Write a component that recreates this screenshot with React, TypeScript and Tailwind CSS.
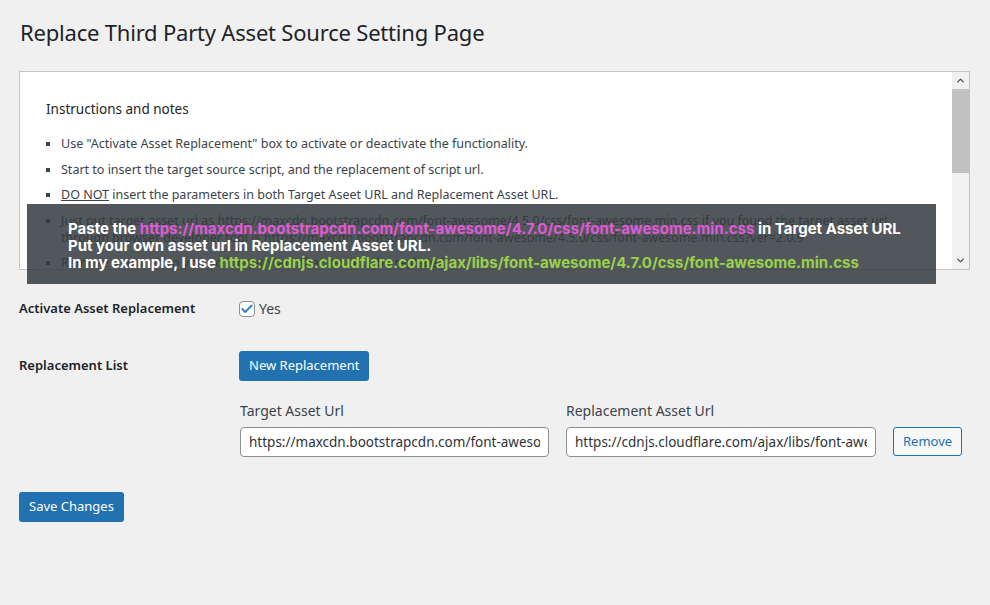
import React, { useState } from "react";
import { ChevronUp, ChevronDown, Check } from "lucide-react";

type Replacement = {
  id: number;
  target: string;
  replacement: string;
};

const notes = [
  <>Use "Activate Asset Replacement" box to activate or deactivate the functionality.</>,
  <>Start to insert the target source script, and the replacement of script url.</>,
  <>
    <span className="underline">DO NOT</span> insert the parameters in both Target Aseet URL and
    Replacement Asset URL.
  </>,
  <>
    Just put target asset url as https://maxcdn.bootstrapcdn.com/font-awesome/4.5.0/css/font-awesome.min.css
    if you found the target asset url through browser developer tool is
    https://maxcdn.bootstrapcdn.com/font-awesome/4.5.0/css/font-awesome.min.css?ver=2.0.9
  </>,
  <>Remove a row when you no longer want that asset to be replaced.</>,
];

export default function App() {
  const [active, setActive] = useState(true);
  const [rows, setRows] = useState<Replacement[]>([
    {
      id: 1,
      target: "https://maxcdn.bootstrapcdn.com/font-awesome/4.7.0/css/font-awesome.min.css",
      replacement: "https://cdnjs.cloudflare.com/ajax/libs/font-awesome/4.7.0/css/font-awesome.min.css",
    },
  ]);

  const addRow = () =>
    setRows((prev) => [...prev, { id: Date.now(), target: "", replacement: "" }]);

  return (
    <div
      className="relative min-h-[605px] w-full bg-[#f0f0f1] pl-[19px] pr-[20px] pt-[17px] text-[#3c434a]"
      style={{ fontFamily: '"Noto Sans", "Open Sans", sans-serif' }}
    >
      {/* Page title */}
      <h1 className="pl-px text-[22px] leading-[30px] tracking-[-0.2px] text-[#1d2327]">
        Replace Third Party Asset Source Setting Page
      </h1>

      {/* Instructions box */}
      <div className="mt-[24px] flex h-[199px] w-[951px] border border-[#c3c4c7] bg-white">
        <div className="flex-1 overflow-hidden pl-[26px] pr-4 pt-[28px]">
          <h3 className="text-[13.5px] leading-[18px] text-[#1d2327]">Instructions and notes</h3>
          <ul className="ml-[15px] mt-[17px] list-[square] text-[12.5px] leading-[17px]">
            {notes.map((n, i) => (
              <li key={i} className="mb-[8.5px]">
                {n}
              </li>
            ))}
          </ul>
        </div>
        {/* scrollbar */}
        <div className="flex w-[17px] flex-col bg-[#f1f1f1]">
          <div className="flex h-[17px] items-center justify-center text-[#505050]">
            <ChevronUp size={11} strokeWidth={3} />
          </div>
          <div className="h-[84px] bg-[#c1c1c1]" />
          <div className="flex-1" />
          <div className="flex h-[17px] items-center justify-center text-[#505050]">
            <ChevronDown size={11} strokeWidth={3} />
          </div>
        </div>
      </div>

      {/* Hint banner laid over the instructions */}
      <div
        className="absolute left-[27px] top-[204px] h-[80px] w-[909px] bg-[rgba(52,57,62,0.85)] pl-[41px] pt-[16px] text-[15px] font-bold leading-[17px] text-white"
        style={{ fontFamily: 'Inter, "Open Sans", sans-serif' }}
      >
        <div>
          Paste the{" "}
          <span className="text-[#e05ad8]">
            https://maxcdn.bootstrapcdn.com/font-awesome/4.7.0/css/font-awesome.min.css
          </span>{" "}
          in Target Asset URL
        </div>
        <div>Put your own asset url in Replacement Asset URL.</div>
        <div>
          In my example, I use{" "}
          <span className="text-[#9ad14b]">
            https://cdnjs.cloudflare.com/ajax/libs/font-awesome/4.7.0/css/font-awesome.min.css
          </span>
        </div>
      </div>

      {/* Settings form */}
      <div className="mt-[28px] flex items-center">
        <div className="w-[220px] text-[13px] font-semibold text-[#1d2327]">Activate Asset Replacement</div>
        <label className="flex items-center gap-[4px] text-[14px]">
          <button
            onClick={() => setActive(!active)}
            className="flex h-4 w-4 items-center justify-center rounded-[4px] border border-[#8c8f94] bg-white text-[#3582c4]"
          >
            {active && <Check size={14} strokeWidth={3.5} />}
          </button>
          Yes
        </label>
      </div>

      <div className="mt-[32px] flex items-center">
        <div className="w-[220px] text-[13px] font-semibold text-[#1d2327]">Replacement List</div>
        <button
          onClick={addRow}
          className="h-[30px] rounded-[3px] bg-[#2271b1] px-[10px] text-[13px] text-white"
        >
          New Replacement
        </button>
      </div>

      <div className="ml-[221px] mt-[20px] flex flex-col gap-2">
        {rows.map((row) => (
          <div key={row.id} className="flex items-end gap-[17px]">
            <div className="flex flex-col">
              <span className="mb-[6px] text-[14px] leading-[20px]">Target Asset Url</span>
              <input
                value={row.target}
                readOnly
                className="h-[30px] w-[309px] rounded-[4px] border border-[#8c8f94] bg-white px-[8px] text-[13.5px] text-[#2c3338] outline-none"
              />
            </div>
            <div className="flex flex-col">
              <span className="mb-[6px] text-[14px] leading-[20px]">Replacement Asset Url</span>
              <input
                value={row.replacement}
                readOnly
                className="h-[30px] w-[310px] rounded-[4px] border border-[#8c8f94] bg-white px-[8px] text-[13.5px] text-[#2c3338] outline-none"
              />
            </div>
            <button
              onClick={() => setRows((prev) => prev.filter((r) => r.id !== row.id))}
              className="mb-px h-[29px] rounded-[3px] border border-[#2271b1] bg-[#f6f7f7] px-[9px] text-[13px] text-[#2271b1]"
            >
              Remove
            </button>
          </div>
        ))}
      </div>

      <button className="mt-[35px] h-[30px] rounded-[3px] bg-[#2271b1] px-[10px] text-[13px] text-white">
        Save Changes
      </button>
    </div>
  );
}
